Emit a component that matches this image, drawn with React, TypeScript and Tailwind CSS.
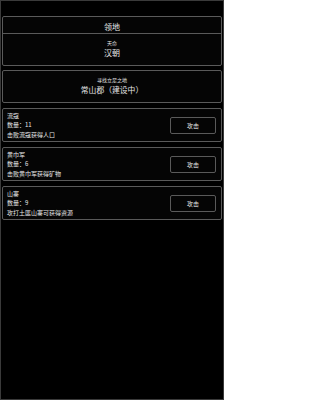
import React from "react";

const cards = [
  { name: "流寇", count: 11, desc: "击败流寇获得人口" },
  { name: "黄巾军", count: 6, desc: "击败黄巾军获得矿物" },
  { name: "山寨", count: 9, desc: "攻打土匪山寨可获得资源" },
];

export default function App() {
  return (
    <div
      className="w-[224px] h-[400px] bg-black border border-[#3a3a3a] text-[#e6e6e6] box-border"
      style={{ fontFamily: '"Noto Sans CJK SC", "Noto Sans", sans-serif' }}
    >
      <div className="px-[1px] pt-[15px] flex flex-col">
        <div className="border border-[#5a5a5a] rounded-[2px] bg-[#050505]">
          <div className="h-[16px] flex items-center justify-center text-[8px] leading-none pt-[3px]">领地</div>
          <div className="border-t border-[#5a5a5a] h-[32px] flex flex-col items-center justify-center">
            <div className="text-[5px] leading-[8px] mt-[-2px]">天命</div>
            <div className="text-[8px] leading-[12px]">汉朝</div>
          </div>
        </div>
        <div className="mt-[4px] border border-[#5a5a5a] rounded-[2px] bg-[#050505] h-[33px] flex flex-col items-center justify-center">
          <div className="text-[5px] leading-[8px] mt-[-1px]">寻找立足之地</div>
          <div className="text-[7.8px] leading-[12px]">常山郡（建设中）</div>
        </div>
        <div className="mt-[5px] flex flex-col gap-[5px]">
          {cards.map((c) => (
            <div
              key={c.name}
              className="border border-[#5a5a5a] rounded-[2px] bg-[#050505] h-[34px] flex items-center justify-between pl-[4px] pr-[5px]"
            >
              <div className="flex flex-col text-[6px] leading-[9.5px]">
                <div>{c.name}</div>
                <div>数量：{c.count}</div>
                <div>{c.desc}</div>
              </div>
              <div className="w-[46px] h-[17px] border border-[#5a5a5a] rounded-[2px] flex items-center justify-center text-[6px]">
                攻击
              </div>
            </div>
          ))}
        </div>
      </div>
    </div>
  );
}
